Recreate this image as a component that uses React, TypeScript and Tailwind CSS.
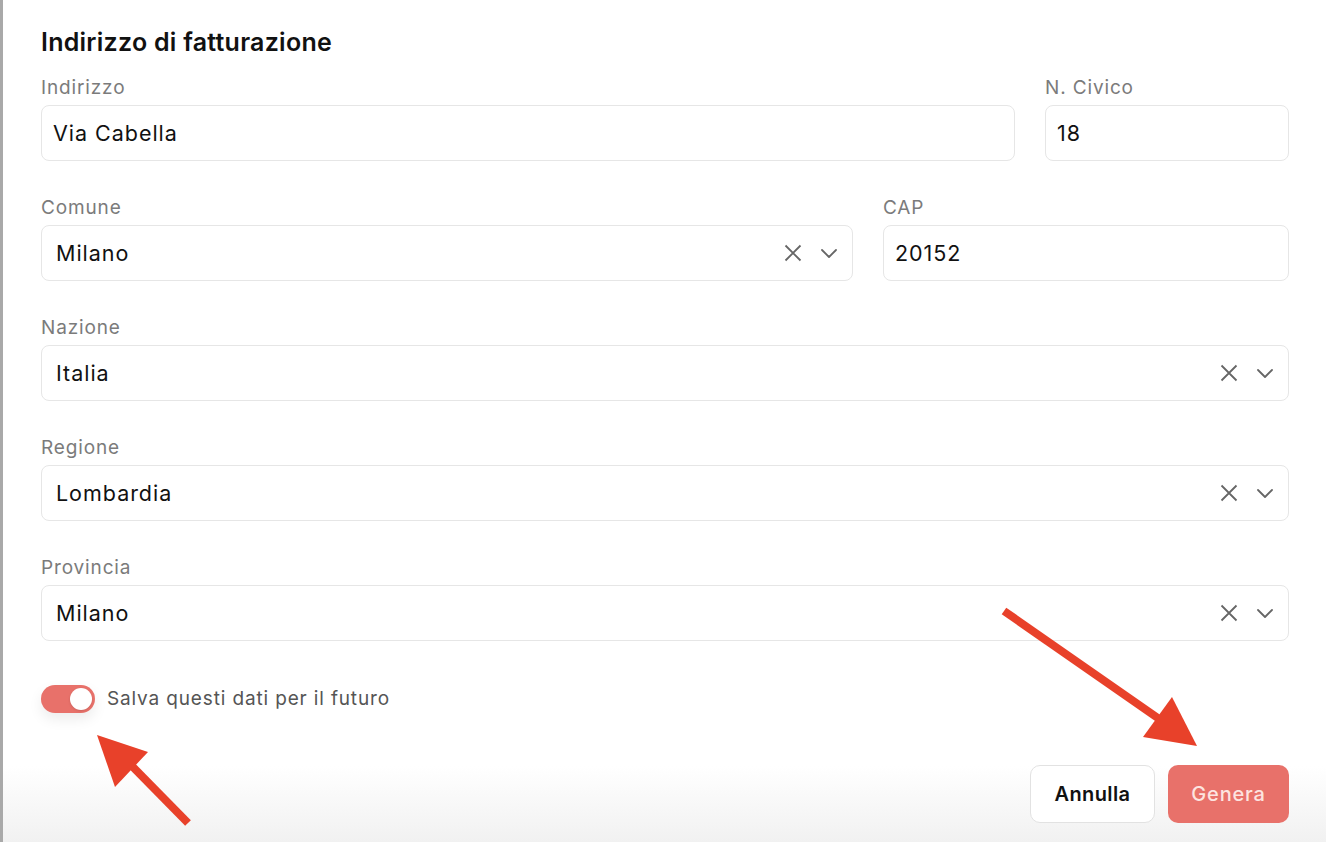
import React from 'react';

const font = { fontFamily: 'Inter, "Noto Sans", sans-serif' };

function Label({ children }: { children: React.ReactNode }) {
  return <div className="text-[19px] leading-[24px] tracking-[0.045em] text-[#7b7b7b] mb-[5px]">{children}</div>;
}

function ClearIcon() {
  return (
    <svg width="18" height="18" viewBox="0 0 18 18" className="shrink-0">
      <path d="M1.5 1.5 16.5 16.5M16.5 1.5 1.5 16.5" stroke="#666" strokeWidth="1.8" fill="none" />
    </svg>
  );
}

function Chevron() {
  return (
    <svg width="16" height="9" viewBox="0 0 16 9" className="shrink-0 ml-[19px]">
      <path d="M1 1l7 7 7-7" stroke="#666" strokeWidth="1.8" fill="none" strokeLinecap="round" strokeLinejoin="round" />
    </svg>
  );
}

function TextField({ label, value }: { label: string; value: string }) {
  return (
    <div className="flex flex-col">
      <Label>{label}</Label>
      <div className="h-[56px] rounded-[8px] border border-[#e6e6e6] bg-white flex items-center px-[11px] text-[21.5px] tracking-[0.045em] text-[#111]">
        {value}
      </div>
    </div>
  );
}

function SelectField({ label, value }: { label: string; value: string }) {
  return (
    <div className="flex flex-col">
      <Label>{label}</Label>
      <div className="h-[56px] rounded-[8px] border border-[#e6e6e6] bg-white flex items-center pl-[14px] pr-[15px] text-[21.5px] tracking-[0.045em] text-[#111]">
        <span className="flex-1">{value}</span>
        <ClearIcon />
        <Chevron />
      </div>
    </div>
  );
}

export default function App() {
  return (
    <div className="relative w-[1326px] h-[842px] overflow-hidden flex bg-white" style={font}>
      <div className="w-[3px] bg-[#a9a9a9] shrink-0" />
      <div className="flex-1 flex flex-col pl-[38px] pr-[37px] pt-[26px] bg-gradient-to-b from-white from-[91%] to-[#f1f1f1]">
        <h2 className="text-[25px] leading-[32px] tracking-[0.01em] font-semibold text-[#111] mb-[18px]">
          Indirizzo di fatturazione
        </h2>

        <div className="flex flex-col gap-[35px]">
          <div className="grid grid-cols-[1fr_244px] gap-[30px]">
            <TextField label="Indirizzo" value="Via Cabella" />
            <TextField label="N. Civico" value="18" />
          </div>
          <div className="grid grid-cols-[812px_1fr] gap-[30px]">
            <SelectField label="Comune" value="Milano" />
            <TextField label="CAP" value="20152" />
          </div>
          <SelectField label="Nazione" value="Italia" />
          <SelectField label="Regione" value="Lombardia" />
          <SelectField label="Provincia" value="Milano" />
        </div>

        <div className="flex items-center mt-[44px] gap-[12px]">
          <div className="relative w-[54px] h-[28px] rounded-full bg-[#e8716a] shadow-[0_6px_14px_rgba(0,0,0,0.08)]">
            <div className="absolute right-[3px] top-[3px] w-[22px] h-[22px] rounded-full bg-white shadow-sm" />
          </div>
          <span className="text-[19px] tracking-[0.045em] text-[#555]">Salva questi dati per il futuro</span>
        </div>

        <div className="flex justify-end gap-[13px] mt-[51px]">
          <button className="w-[125px] h-[58px] rounded-[10px] border border-[#e2e2e2] bg-white text-[20px] tracking-[0.02em] font-semibold text-[#111]">
            Annulla
          </button>
          <button className="w-[121px] h-[58px] rounded-[10px] bg-[#e8716a] text-[20px] tracking-[0.04em] font-medium text-[#fde4e0]">
            Genera
          </button>
        </div>
      </div>

      <svg className="absolute inset-0 pointer-events-none" width="1326" height="842">
        <line x1="188" y1="823" x2="128" y2="762" stroke="#e8412a" strokeWidth="8" />
        <polygon points="97,735 148,752 115,787" fill="#e8412a" />
        <line x1="1004" y1="611" x2="1165" y2="723" stroke="#e8412a" strokeWidth="8" />
        <polygon points="1197,746 1172,697 1143,737" fill="#e8412a" />
      </svg>
    </div>
  );
}
